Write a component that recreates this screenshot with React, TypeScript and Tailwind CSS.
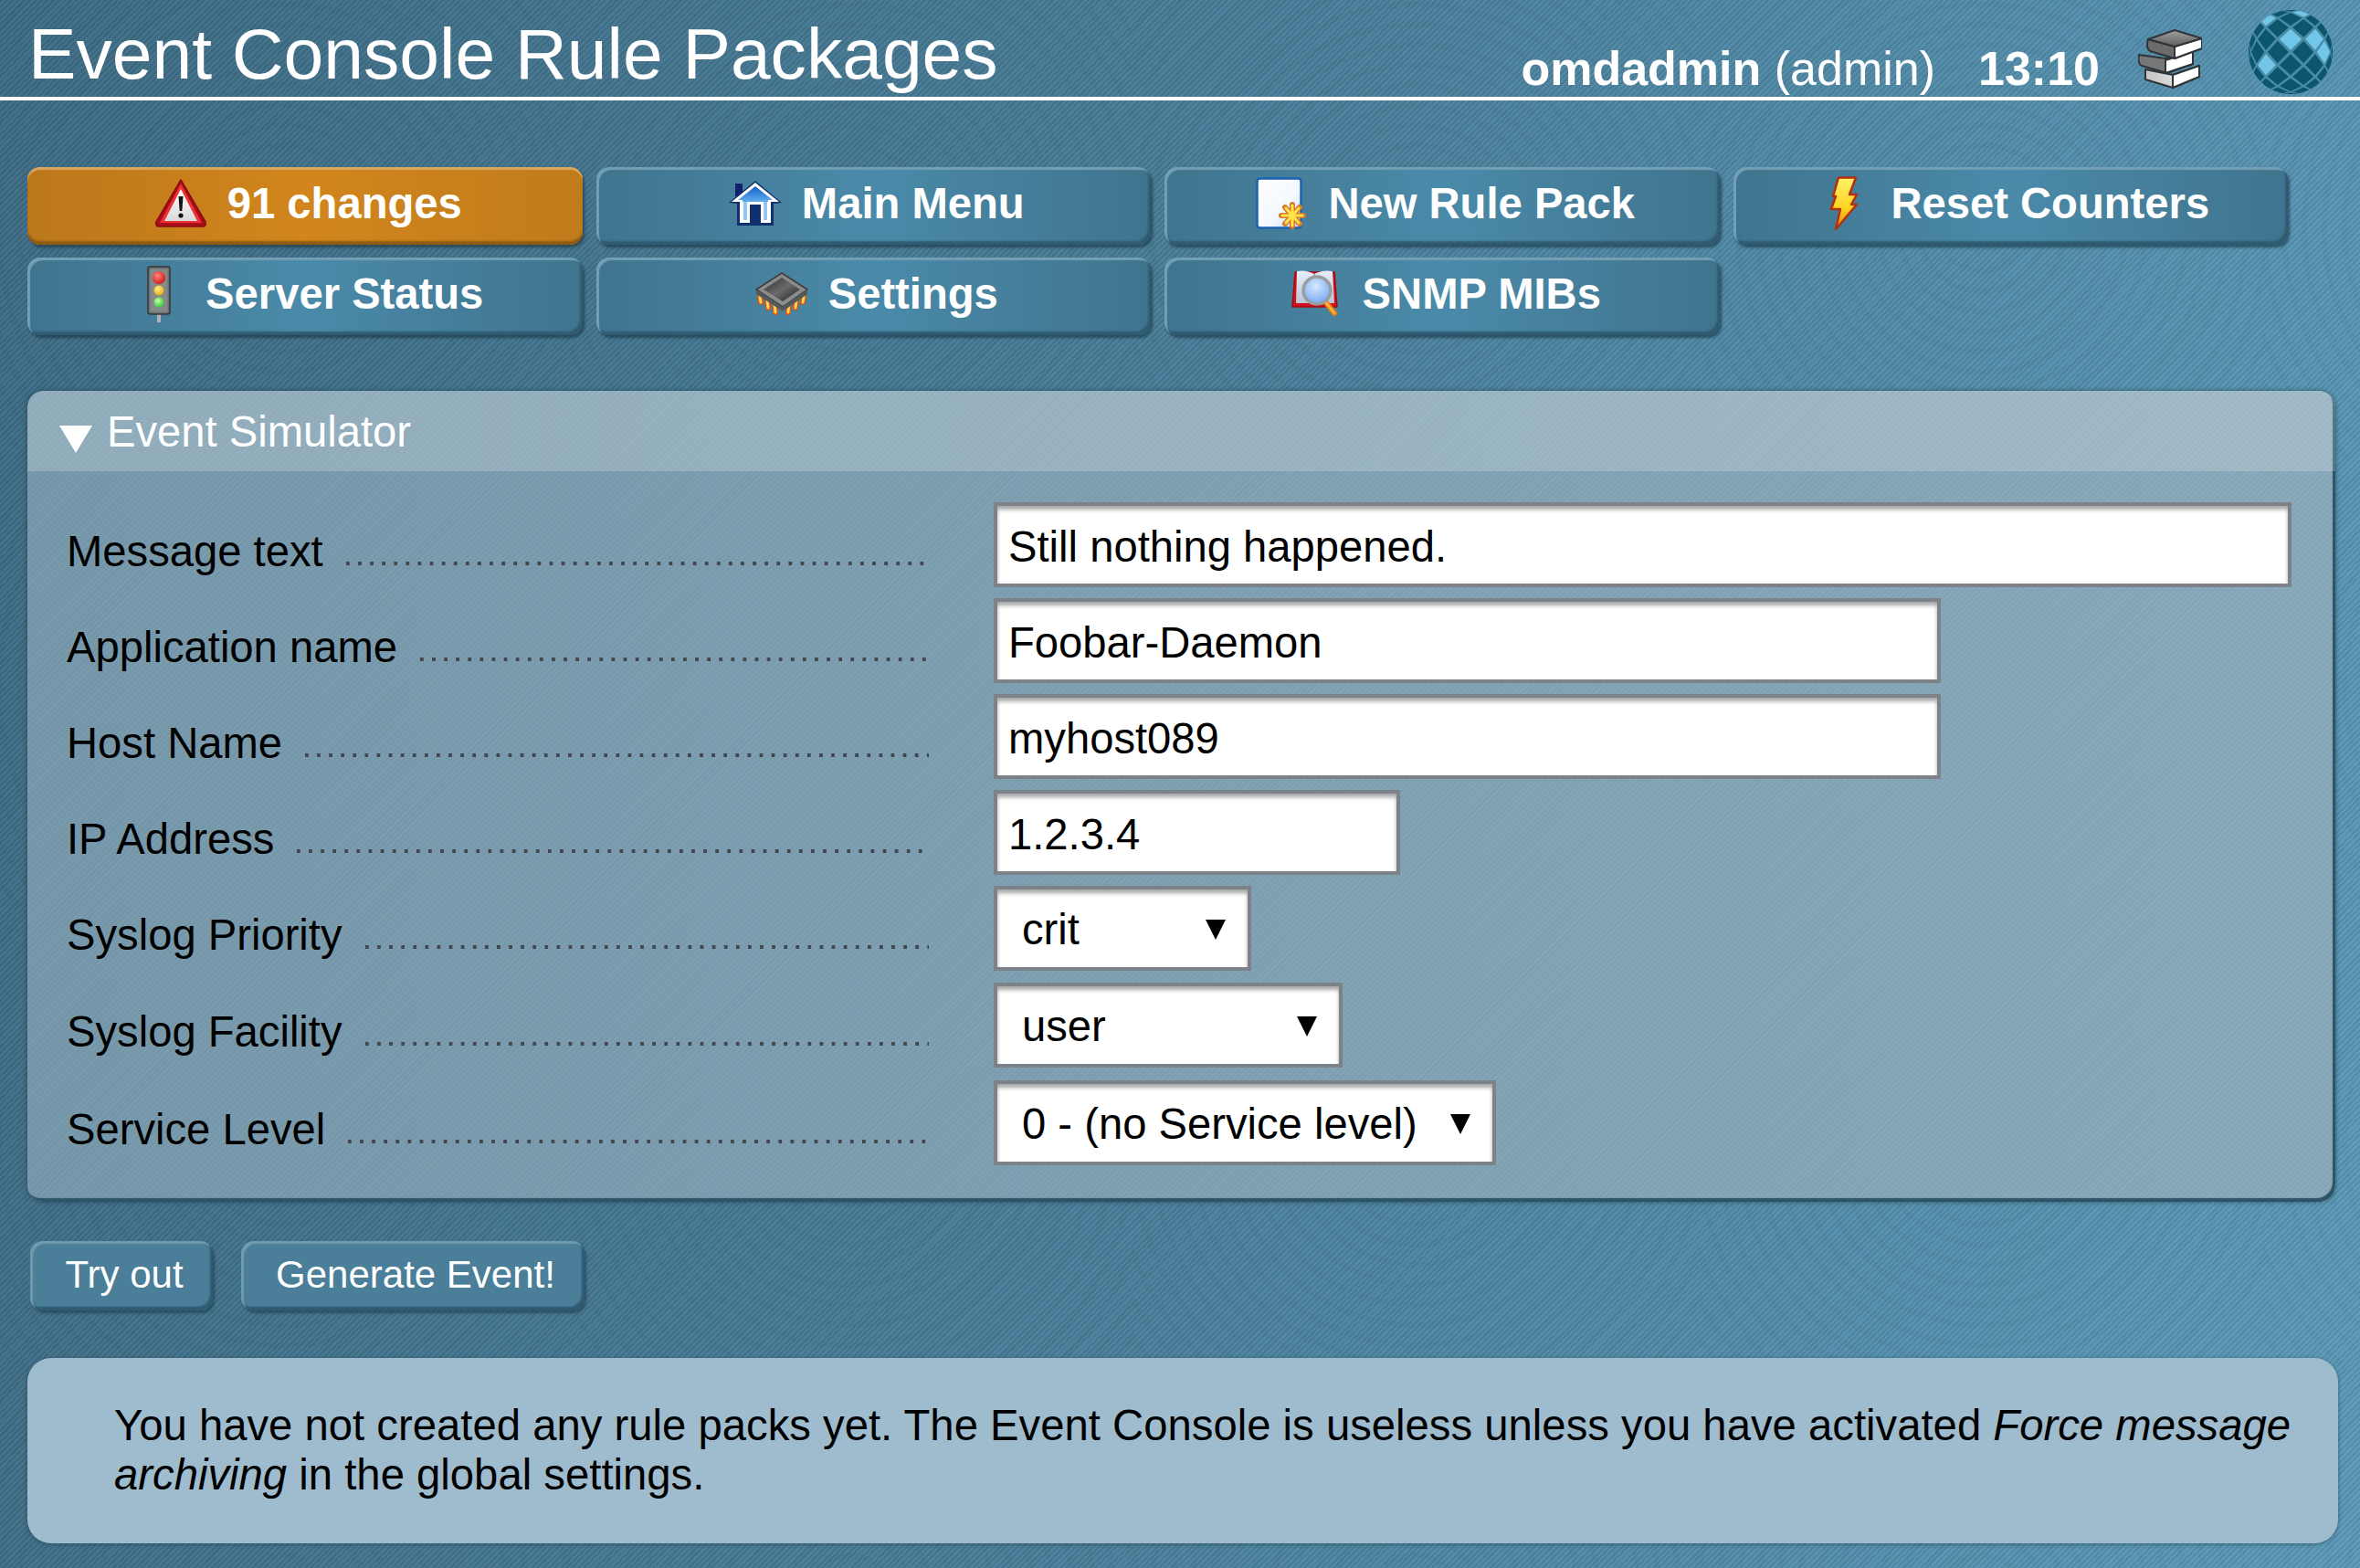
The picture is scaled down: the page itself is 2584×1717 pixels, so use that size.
import type { ReactNode } from "react";

const FONT = "font-['Liberation_Sans',Arial,sans-serif]";

function WarningIcon() {
    return (
        <svg width="58" height="54" viewBox="0 0 58 54">
            <defs>
                <linearGradient id="warnIn" x1="0" y1="0" x2="0" y2="1">
                    <stop offset="0" stopColor="#ffffff" />
                    <stop offset="1" stopColor="#dadada" />
                </linearGradient>
            </defs>
            <path d="M29 1 L56 47 Q57 52 53 52 L5 52 Q1 52 2 47 Z" fill="#a80f16" stroke="#8a0c12" strokeWidth="1.5" strokeLinejoin="round" />
            <path d="M29 5 L52 48 L6 48 Z" fill="#ee3036" />
            <path d="M29 11 L47 46 L11 46 Z" fill="url(#warnIn)" />
            <path d="M26.5 19 L31.5 19 L30.3 35 L27.7 35 Z" fill="#111" />
            <circle cx="29" cy="40" r="2.6" fill="#111" />
        </svg>
    );
}

function HomeIcon() {
    return (
        <svg width="60" height="52" viewBox="0 0 60 52">
            <defs>
                <linearGradient id="roof" x1="0" y1="0" x2="0" y2="1">
                    <stop offset="0" stopColor="#1261c4" />
                    <stop offset="1" stopColor="#62aef0" />
                </linearGradient>
            </defs>
            <rect x="8" y="4" width="8" height="14" fill="#12206e" />
            <path d="M1 25 L30 1 L59 25 L50 26 L50 50 L10 50 L10 26 Z" fill="#10306e" />
            <path d="M4 24 L30 3 L56 24 L47 24 L47 47 L36 47 L36 27 L24 27 L24 47 L13 47 L13 24 Z" fill="#fff" />
            <path d="M11 22 L30 7 L49 22 L44 22 L44 24 L16 24 L16 22 Z" fill="url(#roof)" />
            <path d="M17 24 L43 24 L43 44 L39 44 L39 24 L21 24 L21 44 L17 44 Z" fill="#5ca6ea" opacity="0.65" />
        </svg>
    );
}

function PageIcon() {
    return (
        <svg width="56" height="58" viewBox="0 0 56 58">
            <defs>
                <linearGradient id="page" x1="0" y1="0" x2="1" y2="1">
                    <stop offset="0" stopColor="#ffffff" />
                    <stop offset="0.6" stopColor="#f4f8ff" />
                    <stop offset="1" stopColor="#bcd8f5" />
                </linearGradient>
            </defs>
            <rect x="1.5" y="1.5" width="48" height="54" rx="3" fill="url(#page)" stroke="#1c62b4" strokeWidth="2.5" />
            <g stroke="#d9792a" strokeWidth="6" strokeLinecap="round">
                <path d="M40 30 V54 M28 42 H52 M32 33 L48 51 M48 33 L32 51" />
            </g>
            <g stroke="#ffe24a" strokeWidth="3" strokeLinecap="round">
                <path d="M40 31 V53 M29 42 H51 M33 34 L47 50 M47 34 L33 50" />
            </g>
        </svg>
    );
}

function BoltIcon() {
    return (
        <svg width="32" height="60" viewBox="0 0 32 60">
            <defs>
                <linearGradient id="bolt" x1="0" y1="0" x2="0" y2="1">
                    <stop offset="0" stopColor="#fff36a" />
                    <stop offset="0.6" stopColor="#ffd21e" />
                    <stop offset="1" stopColor="#f08010" />
                </linearGradient>
            </defs>
            <path d="M10 1.5 L29 1.5 L22 20 L30 20 L24 31 L30 31 L7 58 L12 36 L2 36 L7 22 L4 22 Z" fill="url(#bolt)" stroke="#b3300e" strokeWidth="2.5" strokeLinejoin="round" />
        </svg>
    );
}

function TrafficIcon() {
    return (
        <svg width="26" height="62" viewBox="0 0 26 62">
            <defs>
                <radialGradient id="tlRed" cx="0.4" cy="0.35" r="0.7">
                    <stop offset="0" stopColor="#ff8a80" />
                    <stop offset="1" stopColor="#d40f12" />
                </radialGradient>
                <radialGradient id="tlYellow" cx="0.4" cy="0.35" r="0.7">
                    <stop offset="0" stopColor="#fff18a" />
                    <stop offset="1" stopColor="#e4a60e" />
                </radialGradient>
                <radialGradient id="tlGreen" cx="0.4" cy="0.35" r="0.7">
                    <stop offset="0" stopColor="#c6ffb0" />
                    <stop offset="1" stopColor="#2fc82c" />
                </radialGradient>
            </defs>
            <rect x="11" y="50" width="4" height="12" fill="#aeb4b6" />
            <rect x="1" y="1" width="24" height="52" rx="2.5" fill="#6e7172" stroke="#34373a" strokeWidth="1.5" />
            <rect x="3.5" y="3.5" width="19" height="47" fill="#84898b" />
            <circle cx="13" cy="13" r="7" fill="url(#tlRed)" />
            <circle cx="13" cy="27" r="5.5" fill="url(#tlYellow)" />
            <circle cx="13" cy="40" r="5.5" fill="url(#tlGreen)" />
        </svg>
    );
}

function ChipIcon() {
    return (
        <svg width="58" height="48" viewBox="0 0 58 48">
            <defs>
                <linearGradient id="chip" x1="0" y1="0" x2="1" y2="1">
                    <stop offset="0" stopColor="#2e2e2e" />
                    <stop offset="0.5" stopColor="#6a6a6a" />
                    <stop offset="1" stopColor="#222" />
                </linearGradient>
            </defs>
            <g stroke="#d8550f" strokeWidth="6" strokeLinecap="round">
                <path d="M5 27 L6 33 M13 30 L14 39 M21 34 L22 44 M37 34 L36 44 M45 30 L44 39 M53 27 L52 33" />
            </g>
            <g stroke="#ffd257" strokeWidth="3" strokeLinecap="round">
                <path d="M5 27 L6 33 M13 30 L14 39 M21 34 L22 44 M37 34 L36 44 M45 30 L44 39 M53 27 L52 33" />
            </g>
            <path d="M29 1 L57 19 L30 38 L1 19 Z" fill="#8a8d8c" stroke="#3b3e3e" strokeWidth="1.5" strokeLinejoin="round" />
            <path d="M1 19 L30 38 L57 19 L57 24 L30 43 L1 24 Z" fill="#55595a" />
            <path d="M29 6 L49 19 L30 32 L9 19 Z" fill="url(#chip)" />
        </svg>
    );
}

function BookIcon() {
    return (
        <svg width="54" height="52" viewBox="0 0 54 52">
            <defs>
                <radialGradient id="lens" cx="0.45" cy="0.35" r="0.7">
                    <stop offset="0" stopColor="#d6e8ff" />
                    <stop offset="1" stopColor="#6ea5f0" />
                </radialGradient>
                <linearGradient id="bookPage" x1="0" y1="0" x2="0" y2="1">
                    <stop offset="0" stopColor="#e6eef8" />
                    <stop offset="1" stopColor="#b9c6d8" />
                </linearGradient>
            </defs>
            <path d="M4 2 L1 40 L50 40 L47 2 Z" fill="#d3101a" stroke="#a10c12" strokeWidth="1.5" strokeLinejoin="round" />
            <path d="M6 1 Q16 -1 25 4 Q34 -1 45 1 L47 36 L5 36 Z" fill="url(#bookPage)" />
            <path d="M25 4 V36" stroke="#9ba9bc" strokeWidth="1.5" />
            <path d="M36 33 L47 47" stroke="#f08012" strokeWidth="6" strokeLinecap="round" />
            <path d="M36 33 L47 47" stroke="#ffc64a" strokeWidth="2" strokeLinecap="round" />
            <circle cx="28" cy="22" r="15" fill="url(#lens)" stroke="#9a9d9f" strokeWidth="3.5" />
        </svg>
    );
}

function BooksIcon() {
    return (
        <svg width="70" height="66" viewBox="0 0 70 66">
            <defs>
                <linearGradient id="bkTop" x1="0" y1="0" x2="0" y2="1">
                    <stop offset="0" stopColor="#a0a0a0" />
                    <stop offset="1" stopColor="#5e5e5e" />
                </linearGradient>
                <linearGradient id="bkLow" x1="0" y1="0" x2="1" y2="0">
                    <stop offset="0" stopColor="#c4c4c4" />
                    <stop offset="1" stopColor="#f2f2f2" />
                </linearGradient>
            </defs>
            <g stroke="#2f3436" strokeWidth="2" strokeLinejoin="round">
                <path d="M8 44 L8 55 L38 64 L67 52 L67 40 L38 50 Z" fill="url(#bkLow)" />
                <path d="M38 50 L38 64 L67 52 L67 40 Z" fill="#fff" />
                <path d="M1 28 Q-1 37 4 40 L32 48 L60 38 L60 24 L30 32 Z" fill="#777" />
                <path d="M30 34 L30 48 L60 38 L60 24 Z" fill="#fff" />
                <path d="M11 11 Q8 20 13 24 L40 32 L70 21 L70 10 L40 19 Z" fill="#6c6c6c" />
                <path d="M40 19 L40 32 L70 21 L70 10 Z" fill="#fff" />
                <path d="M11 11 L40 1 L70 10 L40 19 Z" fill="url(#bkTop)" />
            </g>
        </svg>
    );
}

// Lattice of diamonds bulged onto a sphere; (a, b) are the diagonal cell indexes
const LIGHT_CELLS = ["0,-2", "2,-2", "3,-1", "-2,0", "-2,-4", "1,-5"];
const warp = (p: number) => Math.sin((Math.max(-1, Math.min(1, p)) * Math.PI) / 2);

function globeCells() {
    const cells: { key: string; points: string; light: boolean }[] = [];
    for (let a = -6; a <= 6; a++) {
        for (let b = -6; b <= 6; b++) {
            if (Math.abs(a % 2) !== Math.abs(b % 2)) continue;
            const cx = a * 0.2;
            const cy = b * 0.2 + 0.2;
            const h = 0.17;
            const corners: [number, number][] = [
                [cx - h, cy],
                [cx, cy - h],
                [cx + h, cy],
                [cx, cy + h],
            ];
            cells.push({
                key: `${a},${b}`,
                points: corners.map(([x, y]) => `${warp(x).toFixed(3)},${warp(y).toFixed(3)}`).join(" "),
                light: LIGHT_CELLS.includes(`${a},${b}`),
            });
        }
    }
    return cells;
}

function GlobeIcon() {
    return (
        <svg width="92" height="92" viewBox="-1 -1 2 2">
            <defs>
                <clipPath id="sphere">
                    <circle cx="0" cy="0" r="1" />
                </clipPath>
            </defs>
            <circle cx="0" cy="0" r="1" fill="#4a8ca6" />
            <g clipPath="url(#sphere)">
                {globeCells().map((c) => (
                    <polygon key={c.key} points={c.points} fill={c.light ? "#71c6ea" : "#0c566d"} />
                ))}
            </g>
        </svg>
    );
}

function NavButton({ icon, label, hot }: { icon: ReactNode; label: string; hot?: boolean }) {
    return (
        <button
            className={`flex h-[85px] items-center justify-center gap-[21px] rounded-[14px] pb-[5px] pl-[6px] text-[47.2px] font-bold leading-none text-white ${
                hot
                    ? "bg-gradient-to-r from-[#bb781c] via-[#d2851c] to-[#c07c1c] shadow-[inset_0_3px_1px_#dba75f,inset_0_-4px_2px_#8f5a12,2px_3px_3px_rgba(30,50,60,0.6)]"
                    : "bg-gradient-to-r from-[#40748e] via-[#4a8aa9] to-[#40748e] shadow-[inset_3px_3px_1px_#73a0b5,inset_-3px_-4px_2px_#2f5b72,2px_3px_3px_rgba(20,45,60,0.6)]"
            }`}
        >
            <span className="flex w-[60px] justify-center">{icon}</span>
            {label}
        </button>
    );
}

function Field({ label, children, rowClass }: { label: string; children: ReactNode; rowClass: string }) {
    return (
        <div className={`flex items-start ${rowClass}`}>
            <div className="flex w-[987px] pl-[43px] pt-[27px] text-[47.2px] leading-[53px] text-black">
                <span className="shrink-0">{label}</span>
                <span className="mb-[11px] ml-[25px] h-[4px] flex-1 self-end bg-[linear-gradient(90deg,#41474c_4px,transparent_4px)] bg-[length:13.1px_4px]" />
            </div>
            <div className="ml-[71px]">{children}</div>
        </div>
    );
}

const fieldBox =
    "block h-[93px] border-[4px] border-[#7c8287] bg-white text-[47.2px] text-black shadow-[inset_0_4px_4px_rgba(0,0,0,0.35)] outline-none";

function TextField({ value, width }: { value: string; width: string }) {
    return <input readOnly defaultValue={value} className={`${fieldBox} ${width} pl-[12px] pt-[3px]`} />;
}

function SelectField({ value, width }: { value: string; width: string }) {
    return (
        <div className={`relative ${width}`}>
            <select defaultValue={value} className={`${fieldBox} w-full appearance-none pl-[27px] pt-[3px]`}>
                <option>{value}</option>
            </select>
            <span className="absolute right-[28px] top-[37px] h-0 w-0 border-x-[11px] border-t-[22px] border-x-transparent border-t-black" />
        </div>
    );
}

function FormButton({ label, width }: { label: string; width: string }) {
    return (
        <button
            className={`h-[76px] ${width} rounded-[14px] bg-[#4a7e99] pb-[2px] pl-[6px] text-[42px] leading-none text-white shadow-[inset_3px_3px_1px_#6f9bb0,inset_-3px_-4px_2px_#2f5a70,2px_3px_3px_rgba(20,45,60,0.5)]`}
        >
            {label}
        </button>
    );
}

export default function App() {
    return (
        <div
            className={`h-[1717px] w-full overflow-hidden text-white ${FONT} [background-image:repeating-radial-gradient(circle_at_center,rgba(0,0,0,0.018)_0px,rgba(0,0,0,0.018)_6px,transparent_6px,transparent_22px),repeating-linear-gradient(135deg,rgba(0,0,0,0.07)_0px,rgba(0,0,0,0.07)_2px,rgba(255,255,255,0.03)_2px,rgba(255,255,255,0.03)_4.5px),linear-gradient(100deg,#3d6c85_0%,#4a7f9a_50%,#5b9ab9_100%)] [background-size:620px_500px,auto,auto]`}
        >
            <header className="flex h-[110px] items-start border-b-4 border-white">
                <h1 className="pl-[31px] pt-[13px] text-[78.6px] font-normal leading-[92px]">Event Console Rule Packages</h1>
                <div className="ml-auto flex items-start">
                    <span className="pt-[45px] text-[52px] leading-[60px]">
                        <b>omdadmin</b> (admin)
                    </span>
                    <b className="ml-[47px] pt-[45px] text-[52px] leading-[60px]">13:10</b>
                    <span className="ml-[42px] pt-[32px]">
                        <BooksIcon />
                    </span>
                    <span className="ml-[51px] mr-[30px] pt-[11px]">
                        <GlobeIcon />
                    </span>
                </div>
            </header>

            <main className="pl-[30px] pr-[24px]">
                <nav className="mt-[73px] grid w-[2475px] grid-cols-4 gap-x-[15px] gap-y-[14px]">
                    <NavButton hot icon={<WarningIcon />} label="91 changes" />
                    <NavButton icon={<HomeIcon />} label="Main Menu" />
                    <NavButton icon={<PageIcon />} label="New Rule Pack" />
                    <NavButton icon={<BoltIcon />} label="Reset Counters" />
                    <NavButton icon={<TrafficIcon />} label="Server Status" />
                    <NavButton icon={<ChipIcon />} label="Settings" />
                    <NavButton icon={<BookIcon />} label="SNMP MIBs" />
                </nav>

                <section className="mr-[3px] mt-[61px] h-[888px] overflow-hidden rounded-[18px] shadow-[inset_-3px_-4px_1px_#2c5366,0_0_5px_rgba(20,45,60,0.6)] [background-image:repeating-linear-gradient(135deg,rgba(0,0,0,0.025)_0px,rgba(0,0,0,0.025)_2px,rgba(255,255,255,0.025)_2px,rgba(255,255,255,0.025)_4.5px),linear-gradient(90deg,#7598aa,#88a9ba)]">
                    <div className="flex h-[88px] items-start bg-white/20 pl-[35px]">
                        <span className="mt-[38px] h-0 w-0 border-x-[18px] border-t-[30px] border-x-transparent border-t-white" />
                        <span className="ml-[16px] pt-[18px] text-[47.2px] leading-[53px] text-white">Event Simulator</span>
                    </div>
                    <div className="pt-[34px]">
                        <Field label="Message text" rowClass="h-[105px]">
                            <TextField value="Still nothing happened." width="w-[1421px]" />
                        </Field>
                        <Field label="Application name" rowClass="h-[105px]">
                            <TextField value="Foobar-Daemon" width="w-[1037px]" />
                        </Field>
                        <Field label="Host Name" rowClass="h-[105px]">
                            <TextField value="myhost089" width="w-[1037px]" />
                        </Field>
                        <Field label="IP Address" rowClass="h-[105px]">
                            <TextField value="1.2.3.4" width="w-[445px]" />
                        </Field>
                        <Field label="Syslog Priority" rowClass="h-[106px]">
                            <SelectField value="crit" width="w-[282px]" />
                        </Field>
                        <Field label="Syslog Facility" rowClass="h-[107px]">
                            <SelectField value="user" width="w-[382px]" />
                        </Field>
                        <Field label="Service Level" rowClass="h-[94px]">
                            <SelectField value="0 - (no Service level)" width="w-[550px]" />
                        </Field>
                    </div>
                </section>

                <div className="ml-[3px] mt-[43px] flex gap-[31px]">
                    <FormButton label="Try out" width="w-[200px]" />
                    <FormButton label="Generate Event!" width="w-[376px]" />
                </div>

                <div className="mt-[52px] h-[203px] rounded-[26px] bg-[#9ebccd] pl-[95px] pr-[40px] pt-[47px] text-[47.27px] leading-[54px] text-black shadow-[0_1px_4px_rgba(20,45,60,0.5)]">
                    You have not created any rule packs yet. The Event Console is useless unless you have activated{" "}
                    <i>Force message archiving</i> in the global settings.
                </div>
            </main>
        </div>
    );
}
